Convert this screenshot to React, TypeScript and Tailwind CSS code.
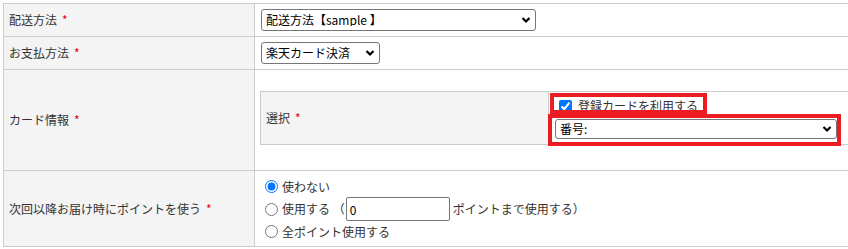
import { ReactNode } from "react";

function Required() {
  return <span className="ml-[5px] text-[#e60012]">*</span>;
}

function Chevron() {
  return (
    <svg
      className="pointer-events-none absolute right-[5px] top-1/2 -translate-y-1/2"
      width="10"
      height="7"
      viewBox="0 0 10 7"
    >
      <path d="M1.5 1.5 L5 5 L8.5 1.5" fill="none" stroke="#000" strokeWidth="2.2" />
    </svg>
  );
}

function Select({ value, className }: { value: string; className: string }) {
  return (
    <div className={`relative ${className}`}>
      <select
        defaultValue={value}
        className="h-full w-full appearance-none rounded-[3px] border border-[#767676] bg-white pl-[4px] pr-5 text-[12px] leading-none text-black outline-none"
      >
        <option>{value}</option>
      </select>
      <Chevron />
    </div>
  );
}

function Row({
  label,
  height,
  children,
}: {
  label: string;
  height: string;
  children: ReactNode;
}) {
  return (
    <div className={`flex border-b border-[#cccccc] ${height}`}>
      <div className="flex w-[251px] shrink-0 items-center border-r border-[#cccccc] bg-[#f3f4f3] pl-[5px]">
        {label}
        <Required />
      </div>
      <div className="flex-1">{children}</div>
    </div>
  );
}

export default function App() {
  return (
    <div className="h-[249px] w-[848px] overflow-hidden bg-white pl-[3px] pt-[3px] font-['Noto_Sans_CJK_JP',sans-serif] text-[12px] leading-none text-[#333]">
      <div className="w-[900px] border-l border-t border-[#cccccc]">
        <Row label="配送方法" height="h-[33px]">
          <div className="flex h-full items-center pl-[6px]">
            <Select value="配送方法【sample 】" className="h-[22px] w-[275px]" />
          </div>
        </Row>

        <Row label="お支払方法" height="h-[33px]">
          <div className="flex h-full items-center pl-[6px]">
            <Select value="楽天カード決済" className="h-[22px] w-[119px]" />
          </div>
        </Row>

        <Row label="カード情報" height="h-[101px]">
          <div className="pl-[5px] pt-[21px]">
            <div className="flex h-[54px] border border-[#cccccc]">
              <div className="flex w-[288px] shrink-0 items-center border-r border-[#cccccc] bg-[#f3f4f3] pl-[5px]">
                選択
                <Required />
              </div>
              <div className="relative flex-1 bg-white pl-[6px] pt-[5px]">
                <label className="flex h-[18px] items-center">
                  <input
                    type="checkbox"
                    defaultChecked
                    className="m-0 ml-[4px] h-[13px] w-[13px]"
                  />
                  <span className="ml-[6px]">登録カードを利用する</span>
                </label>
                <Select value="番号:" className="mt-[4px] h-[20px] w-[282px]" />

                {/* annotation boxes */}
                <div className="pointer-events-none absolute left-[1px] top-[1px] h-[21px] w-[157px] border-4 border-[#ec1c24]" />
                <div className="pointer-events-none absolute left-[-1px] top-[22px] h-[32px] w-[293px] border-4 border-[#ec1c24]" />
              </div>
            </div>
          </div>
        </Row>

        <Row label="次回以降お届け時にポイントを使う" height="h-[76px]">
          <div className="flex flex-col pl-[10px] pt-[5px]">
            <label className="flex h-[21px] items-center">
              <input type="radio" name="point" defaultChecked className="m-0 h-[13px] w-[13px]" />
              <span className="ml-[4px]">使わない</span>
            </label>
            <label className="flex h-[24px] items-center">
              <input type="radio" name="point" className="m-0 h-[13px] w-[13px]" />
              <span className="ml-[4px]">使用する （</span>
              <input
                type="text"
                defaultValue="0"
                className="ml-[1px] h-[24px] w-[104px] rounded-[2px] border border-[#767676] bg-white px-[3px] text-[12px] text-black outline-none"
              />
              <span className="ml-[3px]">ポイントまで使用する）</span>
            </label>
            <label className="flex h-[21px] items-center">
              <input type="radio" name="point" className="m-0 h-[13px] w-[13px]" />
              <span className="ml-[4px]">全ポイント使用する</span>
            </label>
          </div>
        </Row>
      </div>
    </div>
  );
}
